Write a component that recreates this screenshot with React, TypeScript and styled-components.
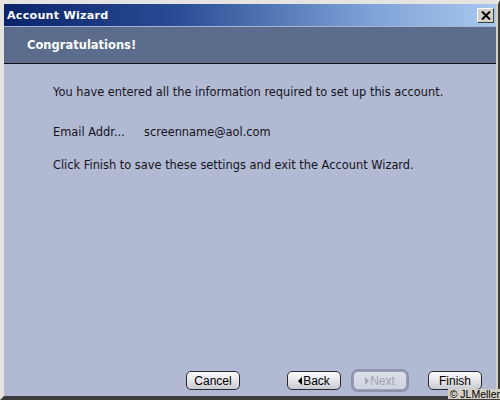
import React from "react";
import styled, { createGlobalStyle } from "styled-components";

const Global = createGlobalStyle`
  html, body { margin: 0; padding: 0; background: #d4d0c8; }
  body { width: 500px; height: 400px; overflow: hidden; }
`;

const Frame = styled.div`
  position: relative;
  box-sizing: border-box;
  width: 500px;
  height: 400px;
  display: flex;
  flex-direction: column;
  background: #d4d0c8;
  border-style: solid;
  border-width: 4px 2px 4px 4px;
  border-color: #e6e4e0 #3c3c3c #3c3c3c #e6e4e0;
  font-family: "DejaVu Sans", sans-serif;
`;

const TitleBar = styled.div`
  height: 22px;
  flex: none;
  display: flex;
  align-items: center;
  justify-content: space-between;
  padding: 0 2px 0 3px;
  margin-right: 2px;
  background: linear-gradient(90deg, #0a246a 0%, #2a4c95 35%, #7fa3d8 75%, #a8c8ee 100%);
`;

const Title = styled.span`
  color: #ffffff;
  font-family: "DejaVu Sans", sans-serif;
  font-weight: bold;
  font-size: 11.2px;
  letter-spacing: 0.2px;
`;

const CloseButton = styled.div`
  width: 17px;
  height: 15px;
  box-sizing: border-box;
  background: #d4d0c8;
  border: 1px solid;
  border-color: #ffffff #404040 #404040 #ffffff;
  display: flex;
  align-items: center;
  justify-content: center;
`;

const Header = styled.div`
  height: 38px;
  flex: none;
  box-sizing: border-box;
  margin-right: 2px;
  border-top: 1px solid #a5b3d0;
  border-bottom: 1px solid #101010;
  background: #5b6c8d;
  display: flex;
  align-items: center;
  padding-left: 23px;
`;

const HeaderText = styled.span`
  color: #ffffff;
  font-family: "DejaVu Sans", sans-serif;
  font-weight: bold;
  font-size: 11.5px;
  letter-spacing: 0;
`;

const Body = styled.div`
  flex: 1;
  margin-right: 2px;
  background: #b1b9d3;
  display: flex;
  flex-direction: column;
  padding: 21px 0 0 49px;
`;

const Line = styled.div<{ $gap: number }>`
  margin-top: ${(p) => p.$gap}px;
  font-family: "DejaVu Sans", sans-serif;
  font-size: 11.4px;
  color: #141420;
  line-height: 14px;
  display: flex;
`;

const Label = styled.span`
  width: 91px;
`;

const Spacer = styled.div`
  flex: 1;
`;

const Footer = styled.div`
  display: flex;
  align-items: center;
  padding: 0 0 6px 132px;
`;

const Button = styled.div<{ $ml: number; $disabled?: boolean }>`
  flex: none;
  margin-left: ${(p) => p.$ml}px;
  width: 54px;
  height: 19px;
  box-sizing: border-box;
  border: 1px solid #2a2a30;
  border-radius: 5px;
  background: linear-gradient(180deg, #fbfbfb 0%, #e8e8ec 45%, #c9cad2 100%);
  display: flex;
  align-items: center;
  justify-content: center;
  gap: 1px;
  font-family: "Liberation Sans", Arial, sans-serif;
  font-size: 12px;
  color: ${(p) => (p.$disabled ? "#a0a4b0" : "#000000")};
  ${(p) =>
    p.$disabled
      ? `border-color: #9aa0b4; box-shadow: 0 0 0 2px #8c93ab; background: linear-gradient(180deg, #dcdfe8 0%, #d0d4e0 100%);`
      : ""}
`;

const Arrow = styled.span<{ $dir: "left" | "right"; $color: string }>`
  width: 0;
  height: 0;
  border-top: 4px solid transparent;
  border-bottom: 4px solid transparent;
  ${(p) =>
    p.$dir === "left"
      ? `border-right: 4px solid ${p.$color};`
      : `border-left: 4px solid ${p.$color};`}
`;

const Copyright = styled.div`
  position: absolute;
  right: -2px;
  bottom: -3px;
  font-family: "Liberation Sans", Arial, sans-serif;
  font-size: 10.5px;
  line-height: 10px;
  color: #000;
  background: #d4d0c8;
  padding: 0 0 0 2px;
`;

export default function App() {
  return (
    <>
      <Global />
      <Frame>
        <TitleBar>
          <Title>Account Wizard</Title>
          <CloseButton>
            <svg width="10" height="9" viewBox="0 0 10 9">
              <path d="M1 0.5 L9 8.5 M9 0.5 L1 8.5" stroke="#000" strokeWidth="2" />
            </svg>
          </CloseButton>
        </TitleBar>
        <Header>
          <HeaderText>Congratulations!</HeaderText>
        </Header>
        <Body>
          <Line $gap={0}>You have entered all the information required to set up this account.</Line>
          <Line $gap={26}>
            <Label>Email Addr...</Label>
            <span>screenname@aol.com</span>
          </Line>
          <Line $gap={19}>Click Finish to save these settings and exit the Account Wizard.</Line>
          <Spacer />
          <Footer>
            <Button $ml={1}>Cancel</Button>
            <Button $ml={47}>
              <Arrow $dir="left" $color="#000" />
              Back
            </Button>
            <Button $ml={12} $disabled>
              <Arrow $dir="right" $color="#a0a4b0" />
              Next
            </Button>
            <Button $ml={21}>Finish</Button>
          </Footer>
        </Body>
        <Copyright>© JLMeller</Copyright>
      </Frame>
    </>
  );
}
